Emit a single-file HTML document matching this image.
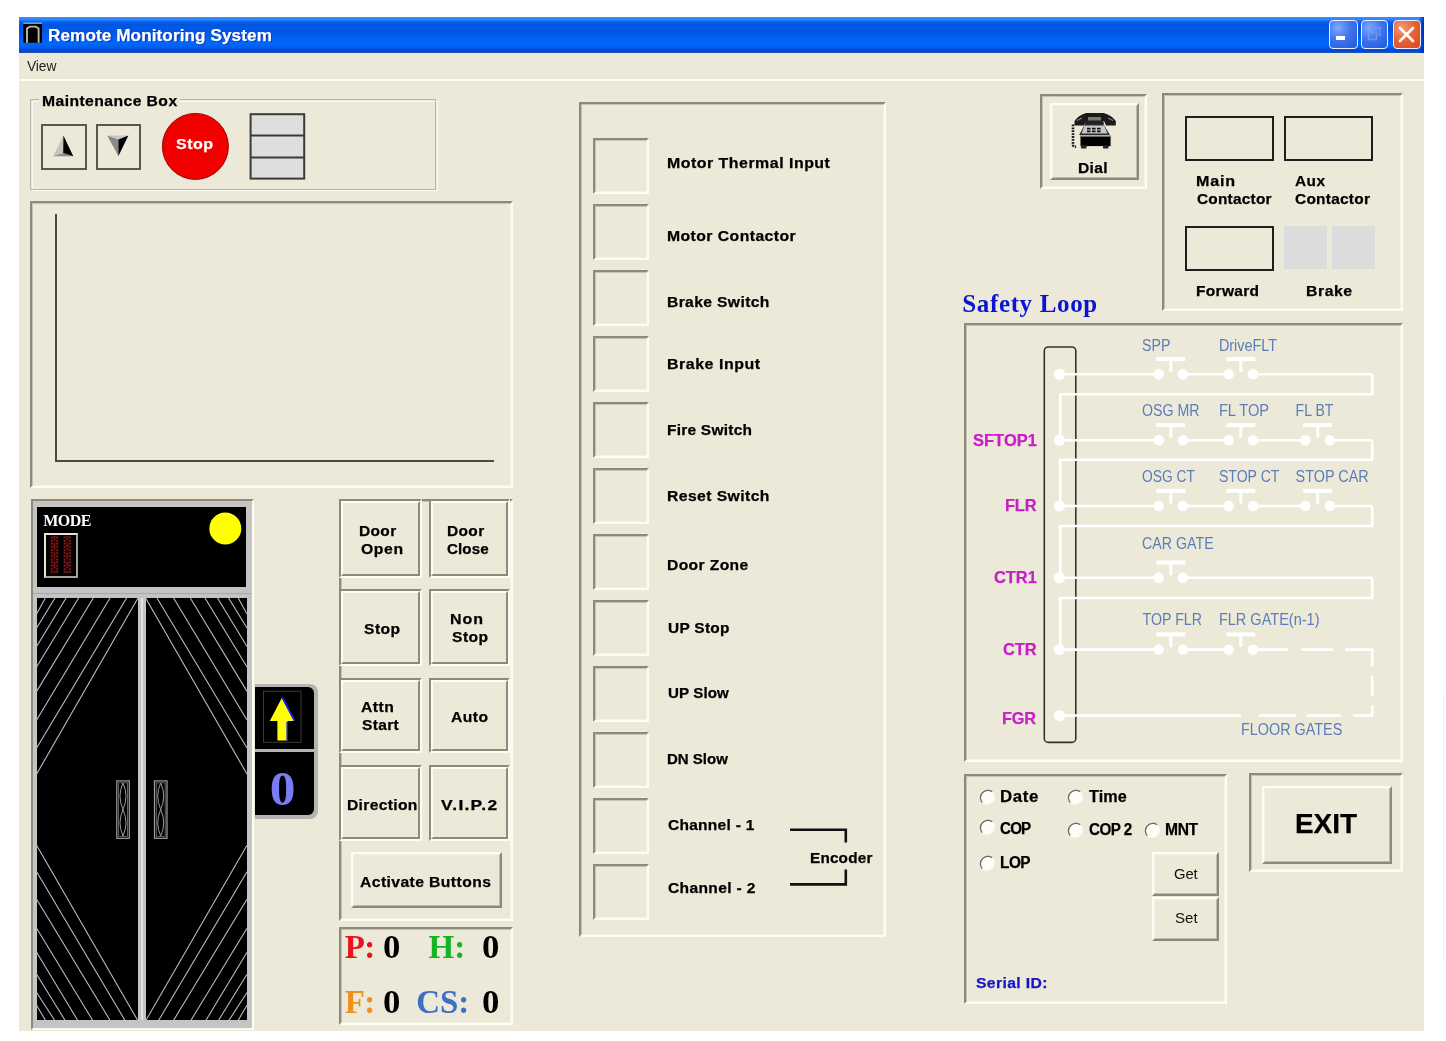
<!DOCTYPE html>
<html><head><meta charset="utf-8"><title>Remote Monitoring System</title>
<style>
html,body{margin:0;padding:0;background:#fff;width:1446px;height:1041px;overflow:hidden;position:relative;}
.b{position:absolute;}
.t{position:absolute;white-space:nowrap;}
svg.b{overflow:visible;}
body>div,body>svg{filter:blur(0.35px);}
.tb{-webkit-text-stroke:0.25px currentColor;}
</style></head><body>
<div class="b" style="left:19px;top:17px;width:1405px;height:36px;background:linear-gradient(to bottom,#3a8cff 0%,#2c86ff 7%,#0a64f0 13%,#0056e2 20%,#0058e6 45%,#0062f6 62%,#0068fe 75%,#005cf2 85%,#0046cc 93%,#2a50b0 100%);"></div>
<div class="b" style="left:1419px;top:17px;width:5px;height:36px;background:linear-gradient(to right,rgba(0,40,170,0),#0030b0);"></div>
<div class="b" style="left:19px;top:53px;width:1405px;height:977.5px;background:#ECE9D8;"></div>
<div class="b" style="left:19px;top:79.3px;width:1405px;height:1.5px;background:#fbfaf3;"></div>
<svg class="b" style="left:0;top:0" width="60" height="60"><rect x="23.3" y="23.5" width="18.7" height="19.3" fill="#000"/><rect x="23.3" y="22.6" width="18.7" height="1.2" fill="#9ab4e6"/><path d="M27 42.8 V28.5 L29.8 26.6 H35.8 L38.6 28.5 V42.8" fill="none" stroke="#bcb8ac" stroke-width="1.9"/></svg>
<div class="t tb" style="left:47.5px;top:26.71px;font-size:17px;line-height:17px;font-family:'Liberation Sans', sans-serif;font-weight:bold;color:#fff;letter-spacing:0.08px;transform:scaleX(1.0089);transform-origin:1.1px 0;text-shadow:1px 1px 0 #0a2a9a;">Remote Monitoring System</div>
<div class="b" style="left:1329px;top:20px;width:29px;height:29px;box-sizing:border-box;border:1.5px solid #e8f0ff;border-radius:4px;background:radial-gradient(circle at 30% 25%,#7fa8ff 0%,#3f74ee 45%,#2058d8 100%);"></div>
<div class="b" style="left:1361px;top:20px;width:27px;height:29px;box-sizing:border-box;border:1.5px solid #e8f0ff;border-radius:4px;background:radial-gradient(circle at 30% 25%,#7fa8ff 0%,#3f74ee 45%,#2058d8 100%);"></div>
<div class="b" style="left:1392.5px;top:20px;width:28.5px;height:29px;box-sizing:border-box;border:1.5px solid #e8f0ff;border-radius:4px;background:radial-gradient(circle at 30% 25%,#f59a78 0%,#e8643a 45%,#d6451c 100%);"></div>
<div class="b" style="left:1336px;top:36px;width:9px;height:4px;background:#fff;"></div>
<svg class="b" style="left:1361px;top:20px" width="27" height="29"><rect x="7.5" y="12.5" width="8" height="7" fill="none" stroke="#6f93ee" stroke-width="1.5"/><path d="M10.5 10 V7.5 H19 V15 H16.5" fill="none" stroke="#6f93ee" stroke-width="1.5"/></svg>
<svg class="b" style="left:1392px;top:20px" width="29" height="29"><path d="M8 8 L21 21 M21 8 L8 21" stroke="#fff" stroke-width="2.6" stroke-linecap="round"/></svg>
<div class="t" style="left:27.03px;top:58.75px;font-size:14px;line-height:14px;font-family:'Liberation Sans', sans-serif;font-weight:normal;color:#222;letter-spacing:-0.12px;transform:scaleX(0.9878);transform-origin:0.07px 0;">View</div>
<div class="b" style="left:31.5px;top:100.6px;width:406px;height:90.2px;box-sizing:border-box;border:1.2px solid #fbfaf2;"></div>
<div class="b" style="left:30px;top:99px;width:406px;height:90.5px;box-sizing:border-box;border:1.5px solid #b9b6a4;"></div>
<div class="b" style="left:39px;top:93px;width:141px;height:11px;background:#ECE9D8;"></div>
<div class="t tb" style="left:42.23px;top:93.3px;font-size:15px;line-height:15px;font-family:'Liberation Sans', sans-serif;font-weight:bold;color:#000;letter-spacing:0.41px;transform:scaleX(1.0469);transform-origin:0.98px 0;">Maintenance Box</div>
<div class="b" style="left:41px;top:124px;width:45.5px;height:45.5px;box-sizing:border-box;border:2px solid #5a584e;"></div>
<div class="b" style="left:95.8px;top:124px;width:45.2px;height:45.5px;box-sizing:border-box;border:2px solid #5a584e;"></div>
<svg class="b" style="left:0;top:0" width="320" height="200"><polygon points="63.4,135.5 53.1,156.3 63.2,153" fill="#c4c4c4"/><polygon points="53.1,156.3 63.2,153 73.3,156.3" fill="#8c8c8c"/><polygon points="63.4,135.5 63.2,153 73.3,156.3" fill="#000"/><polygon points="107.2,135.5 128.4,135.5 118.4,139.5" fill="#c8c8c8"/><polygon points="107.2,135.5 118.4,139.5 118.4,156" fill="#8a8a8a"/><polygon points="118.4,139.5 128.4,135.5 118.4,156" fill="#000"/><circle cx="195.4" cy="146.4" r="33" fill="#f20000" stroke="#9a0000" stroke-width="1"/><rect x="250.6" y="114.2" width="53.6" height="64.4" fill="#dedede" stroke="#3a3a3a" stroke-width="2"/><line x1="250" y1="135.5" x2="305" y2="135.5" stroke="#3a3a3a" stroke-width="2"/><line x1="250" y1="157.5" x2="305" y2="157.5" stroke="#3a3a3a" stroke-width="2"/></svg>
<div class="t tb" style="left:175.53px;top:136.08px;font-size:15.5px;line-height:15.5px;font-family:'Liberation Sans', sans-serif;font-weight:bold;color:#fff;letter-spacing:0.41px;transform:scaleX(1.0371);transform-origin:0.46px 0;">Stop</div>
<div class="b" style="left:30.4px;top:201.4px;width:482.6px;height:287.1px;box-sizing:border-box;border-style:solid;border-width:2.5px;border-color:#8d8a7b #fdfcf5 #fdfcf5 #8d8a7b;box-shadow:inset 1px 1px 0 #8d8a7b66, inset -1px -1px 0 #fdfcf577;"></div>
<div class="b" style="left:54.5px;top:214px;width:2.3px;height:248px;background:#4d4b40;"></div>
<div class="b" style="left:54.5px;top:459.8px;width:439.5px;height:2.2px;background:#4d4b40;"></div>
<div class="b" style="left:31px;top:499px;width:222.5px;height:530.5px;box-sizing:border-box;border-style:solid;border-width:2px;border-color:#8d8a7b #fdfcf5 #fdfcf5 #8d8a7b;"></div>
<div class="b" style="left:33px;top:501px;width:218.5px;height:526.5px;background:#c4c4c4;"></div>
<div class="b" style="left:36.5px;top:507px;width:209.8px;height:79.6px;background:#000;"></div>
<div class="b" style="left:32.5px;top:592.5px;width:218.5px;height:1.5px;background:#a8a8a8;"></div>
<div class="b" style="left:36.6px;top:598px;width:101.4px;height:422.2px;background:#000;"></div>
<div class="b" style="left:145.6px;top:598px;width:101.4px;height:422.2px;background:#000;"></div>
<div class="b" style="left:140.6px;top:598px;width:2.4px;height:422.2px;background:#e2e2e2;"></div>
<div class="t" style="left:43.26px;top:513.4px;font-size:16px;line-height:16px;font-family:'Liberation Serif', serif;font-weight:bold;color:#fff;letter-spacing:-0.57px;">MODE</div>
<div class="b" style="left:43.5px;top:533px;width:34.3px;height:45.4px;box-sizing:border-box;border-style:solid;border-width:2.8px;border-color:#e6e6de #a8a498 #a8a498 #e6e6de;background:#000;"></div>
<svg class="b" style="left:0;top:0" width="260" height="600"><rect x="50.2" y="536" width="8.3" height="37.5" fill="#2a0202"/><rect x="50.9" y="536.6" width="1.6" height="1.6" fill="#8a2020"/><rect x="56.2" y="536.6" width="1.6" height="1.6" fill="#8a2020"/><rect x="50.9" y="540.1" width="1.6" height="1.6" fill="#8a2020"/><rect x="56.2" y="540.1" width="1.6" height="1.6" fill="#8a2020"/><rect x="53.6" y="535.9" width="1.6" height="1.6" fill="#8a2020"/><rect x="53.6" y="538.4" width="1.6" height="1.6" fill="#8a2020"/><rect x="53.6" y="543.2" width="1.6" height="1.6" fill="#8a2020"/><rect x="50.9" y="542.8" width="1.6" height="1.6" fill="#8a2020"/><rect x="56.2" y="542.8" width="1.6" height="1.6" fill="#8a2020"/><rect x="50.9" y="546.0" width="1.6" height="1.6" fill="#8a2020"/><rect x="56.2" y="546.0" width="1.6" height="1.6" fill="#8a2020"/><rect x="50.9" y="549.5" width="1.6" height="1.6" fill="#8a2020"/><rect x="56.2" y="549.5" width="1.6" height="1.6" fill="#8a2020"/><rect x="53.6" y="545.3" width="1.6" height="1.6" fill="#8a2020"/><rect x="53.6" y="547.8" width="1.6" height="1.6" fill="#8a2020"/><rect x="53.6" y="552.6" width="1.6" height="1.6" fill="#8a2020"/><rect x="50.9" y="552.2" width="1.6" height="1.6" fill="#8a2020"/><rect x="56.2" y="552.2" width="1.6" height="1.6" fill="#8a2020"/><rect x="50.9" y="555.4" width="1.6" height="1.6" fill="#8a2020"/><rect x="56.2" y="555.4" width="1.6" height="1.6" fill="#8a2020"/><rect x="50.9" y="558.9" width="1.6" height="1.6" fill="#8a2020"/><rect x="56.2" y="558.9" width="1.6" height="1.6" fill="#8a2020"/><rect x="53.6" y="554.7" width="1.6" height="1.6" fill="#8a2020"/><rect x="53.6" y="557.2" width="1.6" height="1.6" fill="#8a2020"/><rect x="53.6" y="562.0" width="1.6" height="1.6" fill="#8a2020"/><rect x="50.9" y="561.6" width="1.6" height="1.6" fill="#8a2020"/><rect x="56.2" y="561.6" width="1.6" height="1.6" fill="#8a2020"/><rect x="50.9" y="564.8" width="1.6" height="1.6" fill="#8a2020"/><rect x="56.2" y="564.8" width="1.6" height="1.6" fill="#8a2020"/><rect x="50.9" y="568.3" width="1.6" height="1.6" fill="#8a2020"/><rect x="56.2" y="568.3" width="1.6" height="1.6" fill="#8a2020"/><rect x="53.6" y="564.1" width="1.6" height="1.6" fill="#8a2020"/><rect x="53.6" y="566.6" width="1.6" height="1.6" fill="#8a2020"/><rect x="53.6" y="571.4" width="1.6" height="1.6" fill="#8a2020"/><rect x="50.9" y="571.0" width="1.6" height="1.6" fill="#8a2020"/><rect x="56.2" y="571.0" width="1.6" height="1.6" fill="#8a2020"/><rect x="63.2" y="536" width="8.3" height="37.5" fill="#2a0202"/><rect x="63.9" y="536.6" width="1.6" height="1.6" fill="#8a2020"/><rect x="69.2" y="536.6" width="1.6" height="1.6" fill="#8a2020"/><rect x="63.9" y="540.1" width="1.6" height="1.6" fill="#8a2020"/><rect x="69.2" y="540.1" width="1.6" height="1.6" fill="#8a2020"/><rect x="66.6" y="535.9" width="1.6" height="1.6" fill="#8a2020"/><rect x="66.6" y="538.4" width="1.6" height="1.6" fill="#8a2020"/><rect x="66.6" y="543.2" width="1.6" height="1.6" fill="#8a2020"/><rect x="63.9" y="542.8" width="1.6" height="1.6" fill="#8a2020"/><rect x="69.2" y="542.8" width="1.6" height="1.6" fill="#8a2020"/><rect x="63.9" y="546.0" width="1.6" height="1.6" fill="#8a2020"/><rect x="69.2" y="546.0" width="1.6" height="1.6" fill="#8a2020"/><rect x="63.9" y="549.5" width="1.6" height="1.6" fill="#8a2020"/><rect x="69.2" y="549.5" width="1.6" height="1.6" fill="#8a2020"/><rect x="66.6" y="545.3" width="1.6" height="1.6" fill="#8a2020"/><rect x="66.6" y="547.8" width="1.6" height="1.6" fill="#8a2020"/><rect x="66.6" y="552.6" width="1.6" height="1.6" fill="#8a2020"/><rect x="63.9" y="552.2" width="1.6" height="1.6" fill="#8a2020"/><rect x="69.2" y="552.2" width="1.6" height="1.6" fill="#8a2020"/><rect x="63.9" y="555.4" width="1.6" height="1.6" fill="#8a2020"/><rect x="69.2" y="555.4" width="1.6" height="1.6" fill="#8a2020"/><rect x="63.9" y="558.9" width="1.6" height="1.6" fill="#8a2020"/><rect x="69.2" y="558.9" width="1.6" height="1.6" fill="#8a2020"/><rect x="66.6" y="554.7" width="1.6" height="1.6" fill="#8a2020"/><rect x="66.6" y="557.2" width="1.6" height="1.6" fill="#8a2020"/><rect x="66.6" y="562.0" width="1.6" height="1.6" fill="#8a2020"/><rect x="63.9" y="561.6" width="1.6" height="1.6" fill="#8a2020"/><rect x="69.2" y="561.6" width="1.6" height="1.6" fill="#8a2020"/><rect x="63.9" y="564.8" width="1.6" height="1.6" fill="#8a2020"/><rect x="69.2" y="564.8" width="1.6" height="1.6" fill="#8a2020"/><rect x="63.9" y="568.3" width="1.6" height="1.6" fill="#8a2020"/><rect x="69.2" y="568.3" width="1.6" height="1.6" fill="#8a2020"/><rect x="66.6" y="564.1" width="1.6" height="1.6" fill="#8a2020"/><rect x="66.6" y="566.6" width="1.6" height="1.6" fill="#8a2020"/><rect x="66.6" y="571.4" width="1.6" height="1.6" fill="#8a2020"/><rect x="63.9" y="571.0" width="1.6" height="1.6" fill="#8a2020"/><rect x="69.2" y="571.0" width="1.6" height="1.6" fill="#8a2020"/><circle cx="225.3" cy="528.5" r="16" fill="#ffff00"/></svg>
<svg class="b" style="left:0;top:0" width="260" height="1041"><g stroke="#bdbdbd" stroke-width="1.1"><line x1="36.6" y1="614.0" x2="45.4" y2="598.0"/><line x1="247.0" y1="614.0" x2="238.2" y2="598.0"/><line x1="36.6" y1="628.0" x2="55.0" y2="598.0"/><line x1="247.0" y1="628.0" x2="228.6" y2="598.0"/><line x1="36.6" y1="646.5" x2="66.1" y2="598.0"/><line x1="247.0" y1="646.5" x2="217.5" y2="598.0"/><line x1="36.6" y1="667.0" x2="78.6" y2="598.0"/><line x1="247.0" y1="667.0" x2="205.0" y2="598.0"/><line x1="36.6" y1="691.4" x2="93.3" y2="598.0"/><line x1="247.0" y1="691.4" x2="190.3" y2="598.0"/><line x1="36.6" y1="720.0" x2="110.0" y2="598.0"/><line x1="247.0" y1="720.0" x2="173.6" y2="598.0"/><line x1="36.6" y1="748.0" x2="126.6" y2="598.0"/><line x1="247.0" y1="748.0" x2="157.0" y2="598.0"/><line x1="36.6" y1="774.0" x2="138.0" y2="598.0"/><line x1="247.0" y1="774.0" x2="145.6" y2="598.0"/><line x1="36.6" y1="1005.2" x2="45.4" y2="1020.2"/><line x1="247.0" y1="1005.2" x2="238.2" y2="1020.2"/><line x1="36.6" y1="992.5" x2="54.6" y2="1020.2"/><line x1="247.0" y1="992.5" x2="229.0" y2="1020.2"/><line x1="36.6" y1="974.2" x2="65.0" y2="1020.2"/><line x1="247.0" y1="974.2" x2="218.6" y2="1020.2"/><line x1="36.6" y1="952.2" x2="77.6" y2="1020.2"/><line x1="247.0" y1="952.2" x2="206.0" y2="1020.2"/><line x1="36.6" y1="928.2" x2="92.6" y2="1020.2"/><line x1="247.0" y1="928.2" x2="191.0" y2="1020.2"/><line x1="36.6" y1="899.2" x2="110.0" y2="1020.2"/><line x1="247.0" y1="899.2" x2="173.6" y2="1020.2"/><line x1="36.6" y1="871.7" x2="124.9" y2="1020.2"/><line x1="247.0" y1="871.7" x2="158.7" y2="1020.2"/><line x1="36.6" y1="845.2" x2="137.6" y2="1020.2"/><line x1="247.0" y1="845.2" x2="146.0" y2="1020.2"/></g><rect x="116.8" y="780.9" width="12.5" height="57.4" fill="none" stroke="#a0a0a0" stroke-width="1.2"/><rect x="118.6" y="782.8" width="8.9" height="53.6" fill="none" stroke="#6a6a6a" stroke-width="0.9"/><path d="M123.0 783 Q117.0 796 123.0 809.5 Q129.0 796 123.0 783 M123.0 809.5 Q117.0 823 123.0 836 Q129.0 823 123.0 809.5" fill="none" stroke="#9a9a9a" stroke-width="1"/><rect x="154.5" y="780.9" width="12.5" height="57.4" fill="none" stroke="#a0a0a0" stroke-width="1.2"/><rect x="156.3" y="782.8" width="8.9" height="53.6" fill="none" stroke="#6a6a6a" stroke-width="0.9"/><path d="M160.7 783 Q154.7 796 160.7 809.5 Q166.7 796 160.7 783 M160.7 809.5 Q154.7 823 160.7 836 Q166.7 823 160.7 809.5" fill="none" stroke="#9a9a9a" stroke-width="1"/></svg>
<div class="b" style="left:255px;top:683.5px;width:62.5px;height:135px;background:#b4b4b4;border-radius:0 8px 8px 0;"></div>
<div class="b" style="left:255px;top:687px;width:59px;height:61.5px;background:#000;border-radius:0 6px 0 0;"></div>
<div class="b" style="left:255px;top:752px;width:59px;height:63px;background:#000;border-radius:0 0 6px 0;"></div>
<svg class="b" style="left:0;top:0" width="320" height="820"><rect x="263.5" y="691.3" width="37.5" height="51" fill="none" stroke="#3a3a3a" stroke-width="1"/><polygon points="282.2,697.3 294.7,721 287.5,721 287.5,740.5 277.4,740.5 277.4,721 269.8,721" fill="#ffff00"/><polyline points="282.2,697.3 294.7,721 M" fill="none" stroke="#1010ff" stroke-width="1.5"/><path d="M282.6 697.8 L294.5 720.6 M287.2 722 L287.2 740.5" fill="none" stroke="#1a1aff" stroke-width="1.6"/></svg>
<div class="t" style="left:270.48px;top:765.1px;font-size:48px;line-height:48px;font-family:'Liberation Serif', serif;font-weight:bold;color:#7b7bf5;transform:scaleX(1.0714);transform-origin:1.92px 0;">0</div>
<div class="b" style="left:338.5px;top:498.5px;width:174.5px;height:422.5px;box-sizing:border-box;border-style:solid;border-width:2.2px;border-color:#8d8a7b #fdfcf5 #fdfcf5 #8d8a7b;box-shadow:inset 1px 1px 0 #8d8a7b66, inset -1px -1px 0 #fdfcf577;"></div>
<div class="b" style="left:338.5px;top:498.5px;width:83px;height:79.5px;box-sizing:border-box;border-style:solid;border-width:2px;border-color:#8d8a7b #fdfcf5 #fdfcf5 #8d8a7b;"></div>
<div class="b" style="left:340.5px;top:500.5px;width:79px;height:75.5px;box-sizing:border-box;border-style:solid;border-width:2px;border-color:#fdfcf5 #8d8a7b #8d8a7b #fdfcf5;"></div>
<div class="b" style="left:428.5px;top:498.5px;width:81.5px;height:79.5px;box-sizing:border-box;border-style:solid;border-width:2px;border-color:#8d8a7b #fdfcf5 #fdfcf5 #8d8a7b;"></div>
<div class="b" style="left:430.5px;top:500.5px;width:77.5px;height:75.5px;box-sizing:border-box;border-style:solid;border-width:2px;border-color:#fdfcf5 #8d8a7b #8d8a7b #fdfcf5;"></div>
<div class="b" style="left:338.5px;top:589.2px;width:83px;height:76.4px;box-sizing:border-box;border-style:solid;border-width:2px;border-color:#8d8a7b #fdfcf5 #fdfcf5 #8d8a7b;"></div>
<div class="b" style="left:340.5px;top:591.2px;width:79px;height:72.4px;box-sizing:border-box;border-style:solid;border-width:2px;border-color:#fdfcf5 #8d8a7b #8d8a7b #fdfcf5;"></div>
<div class="b" style="left:428.5px;top:589.2px;width:81.5px;height:76.4px;box-sizing:border-box;border-style:solid;border-width:2px;border-color:#8d8a7b #fdfcf5 #fdfcf5 #8d8a7b;"></div>
<div class="b" style="left:430.5px;top:591.2px;width:77.5px;height:72.4px;box-sizing:border-box;border-style:solid;border-width:2px;border-color:#fdfcf5 #8d8a7b #8d8a7b #fdfcf5;"></div>
<div class="b" style="left:338.5px;top:677.6px;width:83px;height:75.9px;box-sizing:border-box;border-style:solid;border-width:2px;border-color:#8d8a7b #fdfcf5 #fdfcf5 #8d8a7b;"></div>
<div class="b" style="left:340.5px;top:679.6px;width:79px;height:71.9px;box-sizing:border-box;border-style:solid;border-width:2px;border-color:#fdfcf5 #8d8a7b #8d8a7b #fdfcf5;"></div>
<div class="b" style="left:428.5px;top:677.6px;width:81.5px;height:75.9px;box-sizing:border-box;border-style:solid;border-width:2px;border-color:#8d8a7b #fdfcf5 #fdfcf5 #8d8a7b;"></div>
<div class="b" style="left:430.5px;top:679.6px;width:77.5px;height:71.9px;box-sizing:border-box;border-style:solid;border-width:2px;border-color:#fdfcf5 #8d8a7b #8d8a7b #fdfcf5;"></div>
<div class="b" style="left:338.5px;top:765.4px;width:83px;height:76.1px;box-sizing:border-box;border-style:solid;border-width:2px;border-color:#8d8a7b #fdfcf5 #fdfcf5 #8d8a7b;"></div>
<div class="b" style="left:340.5px;top:767.4px;width:79px;height:72.1px;box-sizing:border-box;border-style:solid;border-width:2px;border-color:#fdfcf5 #8d8a7b #8d8a7b #fdfcf5;"></div>
<div class="b" style="left:428.5px;top:765.4px;width:81.5px;height:76.1px;box-sizing:border-box;border-style:solid;border-width:2px;border-color:#8d8a7b #fdfcf5 #fdfcf5 #8d8a7b;"></div>
<div class="b" style="left:430.5px;top:767.4px;width:77.5px;height:72.1px;box-sizing:border-box;border-style:solid;border-width:2px;border-color:#fdfcf5 #8d8a7b #8d8a7b #fdfcf5;"></div>
<div class="t tb" style="left:359.02px;top:523.3px;font-size:15px;line-height:15px;font-family:'Liberation Sans', sans-serif;font-weight:bold;color:#000;letter-spacing:0.36px;transform:scaleX(1.0322);transform-origin:0.98px 0;">Door</div>
<div class="t tb" style="left:360.9px;top:541.3px;font-size:15px;line-height:15px;font-family:'Liberation Sans', sans-serif;font-weight:bold;color:#000;letter-spacing:0.6px;transform:scaleX(1.0485);transform-origin:0.6px 0;">Open</div>
<div class="t tb" style="left:447.02px;top:523.3px;font-size:15px;line-height:15px;font-family:'Liberation Sans', sans-serif;font-weight:bold;color:#000;letter-spacing:0.36px;transform:scaleX(1.0322);transform-origin:0.98px 0;">Door</div>
<div class="t tb" style="left:447.4px;top:541.3px;font-size:15px;line-height:15px;font-family:'Liberation Sans', sans-serif;font-weight:bold;color:#000;letter-spacing:0.1px;transform:scaleX(1.0104);transform-origin:0.6px 0;">Close</div>
<div class="t tb" style="left:363.75px;top:620.7px;font-size:15px;line-height:15px;font-family:'Liberation Sans', sans-serif;font-weight:bold;color:#000;letter-spacing:0.46px;transform:scaleX(1.0426);transform-origin:0.45px 0;">Stop</div>
<div class="t tb" style="left:450.02px;top:611.1px;font-size:15px;line-height:15px;font-family:'Liberation Sans', sans-serif;font-weight:bold;color:#000;letter-spacing:0.93px;transform:scaleX(1.0678);transform-origin:0.98px 0;">Non</div>
<div class="t tb" style="left:451.55px;top:629.3px;font-size:15px;line-height:15px;font-family:'Liberation Sans', sans-serif;font-weight:bold;color:#000;letter-spacing:0.46px;transform:scaleX(1.0426);transform-origin:0.45px 0;">Stop</div>
<div class="t tb" style="left:361.32px;top:699.3px;font-size:15px;line-height:15px;font-family:'Liberation Sans', sans-serif;font-weight:bold;color:#000;letter-spacing:0.46px;transform:scaleX(1.0483);transform-origin:0.38px 0;">Attn</div>
<div class="t tb" style="left:362.05px;top:716.8px;font-size:15px;line-height:15px;font-family:'Liberation Sans', sans-serif;font-weight:bold;color:#000;letter-spacing:0.31px;transform:scaleX(1.0369);transform-origin:0.45px 0;">Start</div>
<div class="t tb" style="left:450.62px;top:709.1px;font-size:15px;line-height:15px;font-family:'Liberation Sans', sans-serif;font-weight:bold;color:#000;letter-spacing:0.47px;transform:scaleX(1.0430);transform-origin:0.38px 0;">Auto</div>
<div class="t tb" style="left:346.72px;top:796.9px;font-size:15px;line-height:15px;font-family:'Liberation Sans', sans-serif;font-weight:bold;color:#000;letter-spacing:0.32px;transform:scaleX(1.0408);transform-origin:0.98px 0;">Direction</div>
<div class="t tb" style="left:441.32px;top:796.9px;font-size:15px;line-height:15px;font-family:'Liberation Sans', sans-serif;font-weight:bold;color:#000;letter-spacing:1.1px;transform:scaleX(1.1606);transform-origin:0.07px 0;">V.I.P.2</div>
<div class="b" style="left:351px;top:851.8px;width:151px;height:56.7px;box-sizing:border-box;border-style:solid;border-width:2px;border-color:#fdfcf5 #8d8a7b #8d8a7b #fdfcf5;box-shadow:inset 1px 1px 0 #fdfcf566, inset -1px -1px 0 #8d8a7b77;"></div>
<div class="t tb" style="left:360.02px;top:873.7px;font-size:15px;line-height:15px;font-family:'Liberation Sans', sans-serif;font-weight:bold;color:#000;letter-spacing:0.38px;transform:scaleX(1.0482);transform-origin:0.38px 0;">Activate Buttons</div>
<div class="b" style="left:338.6px;top:927.4px;width:174.4px;height:98.1px;box-sizing:border-box;border-style:solid;border-width:2.2px;border-color:#8d8a7b #fdfcf5 #fdfcf5 #8d8a7b;box-shadow:inset 1px 1px 0 #8d8a7b66, inset -1px -1px 0 #fdfcf577;"></div>
<div class="t" style="left:344.7px;top:930.56px;font-size:33px;line-height:33px;font-family:'Liberation Serif', serif;font-weight:bold;color:#e8141c;">P</div>
<div class="t" style="left:364.26px;top:930.56px;font-size:33px;line-height:33px;font-family:'Liberation Serif', serif;font-weight:bold;color:#e8141c;">:</div>
<div class="t" style="left:428.4px;top:930.56px;font-size:33px;line-height:33px;font-family:'Liberation Serif', serif;font-weight:bold;color:#14b424;">H</div>
<div class="t" style="left:454.16px;top:930.56px;font-size:33px;line-height:33px;font-family:'Liberation Serif', serif;font-weight:bold;color:#14b424;">:</div>
<div class="t" style="left:344.7px;top:985.56px;font-size:33px;line-height:33px;font-family:'Liberation Serif', serif;font-weight:bold;color:#f0901c;">F</div>
<div class="t" style="left:364.26px;top:985.56px;font-size:33px;line-height:33px;font-family:'Liberation Serif', serif;font-weight:bold;color:#f0901c;">:</div>
<div class="t" style="left:416.15px;top:985.56px;font-size:33px;line-height:33px;font-family:'Liberation Serif', serif;font-weight:bold;color:#3c70c4;">CS</div>
<div class="t" style="left:458.26px;top:985.56px;font-size:33px;line-height:33px;font-family:'Liberation Serif', serif;font-weight:bold;color:#3c70c4;">:</div>
<div class="t" style="left:383.24px;top:929.73px;font-size:34px;line-height:34px;font-family:'Liberation Serif', serif;font-weight:bold;color:#000;transform:scaleX(1.0224);transform-origin:1.36px 0;">0</div>
<div class="t" style="left:482.44px;top:929.73px;font-size:34px;line-height:34px;font-family:'Liberation Serif', serif;font-weight:bold;color:#000;transform:scaleX(1.0224);transform-origin:1.36px 0;">0</div>
<div class="t" style="left:383.24px;top:984.73px;font-size:34px;line-height:34px;font-family:'Liberation Serif', serif;font-weight:bold;color:#000;transform:scaleX(1.0224);transform-origin:1.36px 0;">0</div>
<div class="t" style="left:482.44px;top:984.73px;font-size:34px;line-height:34px;font-family:'Liberation Serif', serif;font-weight:bold;color:#000;transform:scaleX(1.0224);transform-origin:1.36px 0;">0</div>
<div class="b" style="left:579.2px;top:102.4px;width:307.3px;height:834.6px;box-sizing:border-box;border-style:solid;border-width:2.5px;border-color:#8d8a7b #fdfcf5 #fdfcf5 #8d8a7b;box-shadow:inset 1px 1px 0 #8d8a7b66, inset -1px -1px 0 #fdfcf577;"></div>
<div class="b" style="left:592.8px;top:138.4px;width:56.2px;height:55.6px;box-sizing:border-box;border-style:solid;border-width:2.5px;border-color:#8d8a7b #fdfcf5 #fdfcf5 #8d8a7b;box-shadow:inset 1px 1px 0 #8d8a7b66, inset -1px -1px 0 #fdfcf577;"></div>
<div class="b" style="left:592.8px;top:204.4px;width:56.2px;height:55.6px;box-sizing:border-box;border-style:solid;border-width:2.5px;border-color:#8d8a7b #fdfcf5 #fdfcf5 #8d8a7b;box-shadow:inset 1px 1px 0 #8d8a7b66, inset -1px -1px 0 #fdfcf577;"></div>
<div class="b" style="left:592.8px;top:270.4px;width:56.2px;height:55.6px;box-sizing:border-box;border-style:solid;border-width:2.5px;border-color:#8d8a7b #fdfcf5 #fdfcf5 #8d8a7b;box-shadow:inset 1px 1px 0 #8d8a7b66, inset -1px -1px 0 #fdfcf577;"></div>
<div class="b" style="left:592.8px;top:336.4px;width:56.2px;height:55.6px;box-sizing:border-box;border-style:solid;border-width:2.5px;border-color:#8d8a7b #fdfcf5 #fdfcf5 #8d8a7b;box-shadow:inset 1px 1px 0 #8d8a7b66, inset -1px -1px 0 #fdfcf577;"></div>
<div class="b" style="left:592.8px;top:402.4px;width:56.2px;height:55.6px;box-sizing:border-box;border-style:solid;border-width:2.5px;border-color:#8d8a7b #fdfcf5 #fdfcf5 #8d8a7b;box-shadow:inset 1px 1px 0 #8d8a7b66, inset -1px -1px 0 #fdfcf577;"></div>
<div class="b" style="left:592.8px;top:468.4px;width:56.2px;height:55.6px;box-sizing:border-box;border-style:solid;border-width:2.5px;border-color:#8d8a7b #fdfcf5 #fdfcf5 #8d8a7b;box-shadow:inset 1px 1px 0 #8d8a7b66, inset -1px -1px 0 #fdfcf577;"></div>
<div class="b" style="left:592.8px;top:534.4px;width:56.2px;height:55.6px;box-sizing:border-box;border-style:solid;border-width:2.5px;border-color:#8d8a7b #fdfcf5 #fdfcf5 #8d8a7b;box-shadow:inset 1px 1px 0 #8d8a7b66, inset -1px -1px 0 #fdfcf577;"></div>
<div class="b" style="left:592.8px;top:600.4px;width:56.2px;height:55.6px;box-sizing:border-box;border-style:solid;border-width:2.5px;border-color:#8d8a7b #fdfcf5 #fdfcf5 #8d8a7b;box-shadow:inset 1px 1px 0 #8d8a7b66, inset -1px -1px 0 #fdfcf577;"></div>
<div class="b" style="left:592.8px;top:666.4px;width:56.2px;height:55.6px;box-sizing:border-box;border-style:solid;border-width:2.5px;border-color:#8d8a7b #fdfcf5 #fdfcf5 #8d8a7b;box-shadow:inset 1px 1px 0 #8d8a7b66, inset -1px -1px 0 #fdfcf577;"></div>
<div class="b" style="left:592.8px;top:732.4px;width:56.2px;height:55.6px;box-sizing:border-box;border-style:solid;border-width:2.5px;border-color:#8d8a7b #fdfcf5 #fdfcf5 #8d8a7b;box-shadow:inset 1px 1px 0 #8d8a7b66, inset -1px -1px 0 #fdfcf577;"></div>
<div class="b" style="left:592.8px;top:798.4px;width:56.2px;height:55.6px;box-sizing:border-box;border-style:solid;border-width:2.5px;border-color:#8d8a7b #fdfcf5 #fdfcf5 #8d8a7b;box-shadow:inset 1px 1px 0 #8d8a7b66, inset -1px -1px 0 #fdfcf577;"></div>
<div class="b" style="left:592.8px;top:864.4px;width:56.2px;height:55.6px;box-sizing:border-box;border-style:solid;border-width:2.5px;border-color:#8d8a7b #fdfcf5 #fdfcf5 #8d8a7b;box-shadow:inset 1px 1px 0 #8d8a7b66, inset -1px -1px 0 #fdfcf577;"></div>
<div class="t tb" style="left:667.42px;top:155.4px;font-size:15px;line-height:15px;font-family:'Liberation Sans', sans-serif;font-weight:bold;color:#000;letter-spacing:0.48px;transform:scaleX(1.0607);transform-origin:0.98px 0;">Motor Thermal Input</div>
<div class="t tb" style="left:667.42px;top:228.2px;font-size:15px;line-height:15px;font-family:'Liberation Sans', sans-serif;font-weight:bold;color:#000;letter-spacing:0.42px;transform:scaleX(1.0506);transform-origin:0.98px 0;">Motor Contactor</div>
<div class="t tb" style="left:667.42px;top:293.7px;font-size:15px;line-height:15px;font-family:'Liberation Sans', sans-serif;font-weight:bold;color:#000;letter-spacing:0.36px;transform:scaleX(1.0432);transform-origin:0.98px 0;">Brake Switch</div>
<div class="t tb" style="left:667.42px;top:355.9px;font-size:15px;line-height:15px;font-family:'Liberation Sans', sans-serif;font-weight:bold;color:#000;letter-spacing:0.51px;transform:scaleX(1.0628);transform-origin:0.98px 0;">Brake Input</div>
<div class="t tb" style="left:667.42px;top:421.9px;font-size:15px;line-height:15px;font-family:'Liberation Sans', sans-serif;font-weight:bold;color:#000;letter-spacing:0.24px;transform:scaleX(1.0310);transform-origin:0.98px 0;">Fire Switch</div>
<div class="t tb" style="left:667.42px;top:487.5px;font-size:15px;line-height:15px;font-family:'Liberation Sans', sans-serif;font-weight:bold;color:#000;letter-spacing:0.4px;transform:scaleX(1.0481);transform-origin:0.98px 0;">Reset Switch</div>
<div class="t tb" style="left:667.42px;top:556.7px;font-size:15px;line-height:15px;font-family:'Liberation Sans', sans-serif;font-weight:bold;color:#000;letter-spacing:0.38px;transform:scaleX(1.0415);transform-origin:0.98px 0;">Door Zone</div>
<div class="t tb" style="left:667.5px;top:619.6px;font-size:15px;line-height:15px;font-family:'Liberation Sans', sans-serif;font-weight:bold;color:#000;letter-spacing:0.28px;transform:scaleX(1.0296);transform-origin:0.9px 0;">UP Stop</div>
<div class="t tb" style="left:667.5px;top:685.3px;font-size:15px;line-height:15px;font-family:'Liberation Sans', sans-serif;font-weight:bold;color:#000;letter-spacing:0.09px;transform:scaleX(1.0087);transform-origin:0.9px 0;">UP Slow</div>
<div class="t tb" style="left:667.42px;top:751.4px;font-size:15px;line-height:15px;font-family:'Liberation Sans', sans-serif;font-weight:bold;color:#000;letter-spacing:-0px;transform:scaleX(0.9998);transform-origin:0.98px 0;">DN Slow</div>
<div class="t tb" style="left:667.8px;top:817.3px;font-size:15px;line-height:15px;font-family:'Liberation Sans', sans-serif;font-weight:bold;color:#000;letter-spacing:0.27px;transform:scaleX(1.0340);transform-origin:0.6px 0;">Channel - 1</div>
<div class="t tb" style="left:667.8px;top:880px;font-size:15px;line-height:15px;font-family:'Liberation Sans', sans-serif;font-weight:bold;color:#000;letter-spacing:0.32px;transform:scaleX(1.0399);transform-origin:0.6px 0;">Channel - 2</div>
<div class="t tb" style="left:810.32px;top:850.1px;font-size:15px;line-height:15px;font-family:'Liberation Sans', sans-serif;font-weight:bold;color:#000;letter-spacing:0.19px;transform:scaleX(1.0196);transform-origin:0.98px 0;">Encoder</div>
<svg class="b" style="left:0;top:0" width="900" height="900"><path d="M790 829.8 H845.8 V842.5 M790 884.4 H845.8 V869.5" fill="none" stroke="#111" stroke-width="2.6"/></svg>
<div class="b" style="left:1040.4px;top:93.8px;width:106.6px;height:95px;box-sizing:border-box;border-style:solid;border-width:2.2px;border-color:#8d8a7b #fdfcf5 #fdfcf5 #8d8a7b;box-shadow:inset 1px 1px 0 #8d8a7b66, inset -1px -1px 0 #fdfcf577;"></div>
<div class="b" style="left:1050.2px;top:102.5px;width:88.8px;height:77.3px;box-sizing:border-box;border-style:solid;border-width:2.2px;border-color:#fdfcf5 #8d8a7b #8d8a7b #fdfcf5;box-shadow:inset 1px 1px 0 #fdfcf566, inset -1px -1px 0 #8d8a7b77;"></div>
<svg class="b" style="left:0;top:0" width="1130" height="160"><path d="M1074.5 125.5 L1074.5 121 Q1078 115.5 1086 113 L1103.8 113 Q1112 115.5 1115.8 121 L1115.8 125.5 L1106 125.5 L1104 121 L1086 121 L1084 125.5 Z" fill="#1a1a1a"/><path d="M1077 120.5 L1082 118 M1108 118 L1113 120.5" stroke="#9a9a9a" stroke-width="1"/><path d="M1085 121 H1103.3 L1104 124 H1085 Z" fill="#222"/><rect x="1088" y="117" width="13" height="3.5" fill="#777"/><path d="M1085 124 H1103.3 L1110 135 H1079.2 Z" fill="#2a2a2a"/><path d="M1084.5 125.5 H1104 L1107.5 133.5 H1081.5 Z" fill="#c8c8c8"/><path d="M1087 128.6 H1101.5 M1087 131.4 H1101.5" stroke="#111" stroke-width="1.6" stroke-dasharray="3.6 1.4"/><rect x="1080.2" y="135.3" width="30.8" height="10.8" fill="#000"/><rect x="1080.2" y="135" width="30.8" height="1.6" fill="#b0b0b0"/><path d="M1080.6 136 V146 M1110.6 136 V146" stroke="#777" stroke-width="1"/><rect x="1081" y="145" width="5.5" height="3.6" rx="1.2" fill="#222"/><rect x="1103" y="145" width="5.5" height="3.6" rx="1.2" fill="#222"/><path d="M1073 124.5 V145 Q1073.5 147 1076 146.5" fill="none" stroke="#1a1a1a" stroke-width="2.6" stroke-dasharray="1.8 1.1"/></svg>
<div class="t tb" style="left:1078.43px;top:159.6px;font-size:15px;line-height:15px;font-family:'Liberation Sans', sans-serif;font-weight:bold;color:#000;letter-spacing:0.35px;transform:scaleX(1.0412);transform-origin:0.98px 0;">Dial</div>
<div class="b" style="left:1161.5px;top:92.7px;width:241.5px;height:218.3px;box-sizing:border-box;border-style:solid;border-width:2.2px;border-color:#8d8a7b #fdfcf5 #fdfcf5 #8d8a7b;box-shadow:inset 1px 1px 0 #8d8a7b66, inset -1px -1px 0 #fdfcf577;"></div>
<div class="b" style="left:1185px;top:115.7px;width:89.3px;height:45.3px;box-sizing:border-box;border:2.2px solid #1e1e1e;"></div>
<div class="b" style="left:1284.2px;top:115.7px;width:89.2px;height:45.3px;box-sizing:border-box;border:2.2px solid #1e1e1e;"></div>
<div class="b" style="left:1185px;top:225.7px;width:89.3px;height:45.5px;box-sizing:border-box;border:2.2px solid #1e1e1e;"></div>
<div class="b" style="left:1284.2px;top:225.7px;width:43.3px;height:43.8px;background:#dcdcdc;"></div>
<div class="b" style="left:1332.1px;top:225.7px;width:43.3px;height:43.8px;background:#dcdcdc;"></div>
<div class="t tb" style="left:1196.33px;top:172.9px;font-size:15px;line-height:15px;font-family:'Liberation Sans', sans-serif;font-weight:bold;color:#000;letter-spacing:0.79px;transform:scaleX(1.0736);transform-origin:0.98px 0;">Main</div>
<div class="t tb" style="left:1196.7px;top:191.3px;font-size:15px;line-height:15px;font-family:'Liberation Sans', sans-serif;font-weight:bold;color:#000;letter-spacing:0.23px;transform:scaleX(1.0261);transform-origin:0.6px 0;">Contactor</div>
<div class="t tb" style="left:1294.83px;top:172.9px;font-size:15px;line-height:15px;font-family:'Liberation Sans', sans-serif;font-weight:bold;color:#000;letter-spacing:0.4px;transform:scaleX(1.0287);transform-origin:0.38px 0;">Aux</div>
<div class="t tb" style="left:1295.4px;top:191.3px;font-size:15px;line-height:15px;font-family:'Liberation Sans', sans-serif;font-weight:bold;color:#000;letter-spacing:0.25px;transform:scaleX(1.0289);transform-origin:0.6px 0;">Contactor</div>
<div class="t tb" style="left:1196.33px;top:282.8px;font-size:15px;line-height:15px;font-family:'Liberation Sans', sans-serif;font-weight:bold;color:#000;letter-spacing:0.31px;transform:scaleX(1.0330);transform-origin:0.98px 0;">Forward</div>
<div class="t tb" style="left:1306.23px;top:282.8px;font-size:15px;line-height:15px;font-family:'Liberation Sans', sans-serif;font-weight:bold;color:#000;letter-spacing:0.54px;transform:scaleX(1.0535);transform-origin:0.98px 0;">Brake</div>
<div class="t" style="left:962.23px;top:291.36px;font-size:25px;line-height:25px;font-family:'Liberation Serif', serif;font-weight:bold;color:#0a14d2;letter-spacing:0.65px;">Safety Loop</div>
<div class="b" style="left:963.8px;top:322.7px;width:439.2px;height:439.3px;box-sizing:border-box;border-style:solid;border-width:2.4px;border-color:#8d8a7b #fdfcf5 #fdfcf5 #8d8a7b;box-shadow:inset 1px 1px 0 #8d8a7b66, inset -1px -1px 0 #fdfcf577;"></div>
<svg class="b" style="left:0;top:0" width="1446" height="1041"><rect x="1044.3" y="347" width="31.5" height="395.4" rx="4" fill="none" stroke="#33322c" stroke-width="1.6"/><path d="M1060.2 374.3 H1158.7 M1183.0 374.3 H1228.6 M1253.0 374.3 H1372.2 M1372.2 374.3 V394.3 H1060.2 V440.3 M1060.2 440.3 H1158.7 M1183.0 440.3 H1228.6 M1253.0 440.3 H1305.4 M1329.9 440.3 H1372.2 M1372.2 440.3 V459.7 H1060.2 V506 M1060.2 506 H1158.7 M1183.0 506 H1228.6 M1253.0 506 H1305.4 M1329.9 506 H1372.2 M1372.2 506 V526 H1060.2 V577.7 M1060.2 577.7 H1158.7 M1183.0 577.7 H1372.2 M1372.2 577.7 V598 H1060.2 V649.6 M1060.2 649.6 H1158.7 M1183.0 649.6 H1228.6 M1253.0 649.6 H1287.8 M1301.2 649.6 H1332.8 M1345.2 649.6 H1372.2 V666.4 M1372.2 675.7 V696.5 M1372.2 705.8 V715.5 H1353.5 M1340.7 715.5 H1306.4 M1296 715.5 H1258.7 M1241 715.5 H1060.2" fill="none" stroke="#ffffff" stroke-width="2.6"/><circle cx="1059.5" cy="374.3" r="5.6" fill="#ffffff"/><circle cx="1059.5" cy="440.3" r="5.6" fill="#ffffff"/><circle cx="1059.5" cy="506" r="5.6" fill="#ffffff"/><circle cx="1059.5" cy="577.7" r="5.6" fill="#ffffff"/><circle cx="1059.5" cy="649.6" r="5.6" fill="#ffffff"/><circle cx="1059.5" cy="715.5" r="5.6" fill="#ffffff"/><circle cx="1158.7" cy="374.3" r="5.2" fill="#ffffff"/><circle cx="1183" cy="374.3" r="5.2" fill="#ffffff"/><rect x="1156.4" y="357.1" width="28.9" height="4" fill="#ffffff"/><rect x="1169.3" y="360.3" width="3" height="11.5" fill="#ffffff"/><circle cx="1228.6" cy="374.3" r="5.2" fill="#ffffff"/><circle cx="1253" cy="374.3" r="5.2" fill="#ffffff"/><rect x="1226.3" y="357.1" width="29.0" height="4" fill="#ffffff"/><rect x="1239.3" y="360.3" width="3" height="11.5" fill="#ffffff"/><circle cx="1158.7" cy="440.3" r="5.2" fill="#ffffff"/><circle cx="1183" cy="440.3" r="5.2" fill="#ffffff"/><rect x="1156.4" y="423.1" width="28.9" height="4" fill="#ffffff"/><rect x="1169.3" y="426.3" width="3" height="11.5" fill="#ffffff"/><circle cx="1228.6" cy="440.3" r="5.2" fill="#ffffff"/><circle cx="1253" cy="440.3" r="5.2" fill="#ffffff"/><rect x="1226.3" y="423.1" width="29.0" height="4" fill="#ffffff"/><rect x="1239.3" y="426.3" width="3" height="11.5" fill="#ffffff"/><circle cx="1305.4" cy="440.3" r="5.2" fill="#ffffff"/><circle cx="1329.9" cy="440.3" r="5.2" fill="#ffffff"/><rect x="1303.1" y="423.1" width="29.1" height="4" fill="#ffffff"/><rect x="1316.2" y="426.3" width="3" height="11.5" fill="#ffffff"/><circle cx="1158.7" cy="506" r="5.2" fill="#ffffff"/><circle cx="1183" cy="506" r="5.2" fill="#ffffff"/><rect x="1156.4" y="488.8" width="28.9" height="4" fill="#ffffff"/><rect x="1169.3" y="492.0" width="3" height="11.5" fill="#ffffff"/><circle cx="1228.6" cy="506" r="5.2" fill="#ffffff"/><circle cx="1253" cy="506" r="5.2" fill="#ffffff"/><rect x="1226.3" y="488.8" width="29.0" height="4" fill="#ffffff"/><rect x="1239.3" y="492.0" width="3" height="11.5" fill="#ffffff"/><circle cx="1305.4" cy="506" r="5.2" fill="#ffffff"/><circle cx="1329.9" cy="506" r="5.2" fill="#ffffff"/><rect x="1303.1" y="488.8" width="29.1" height="4" fill="#ffffff"/><rect x="1316.2" y="492.0" width="3" height="11.5" fill="#ffffff"/><circle cx="1158.7" cy="577.7" r="5.2" fill="#ffffff"/><circle cx="1183" cy="577.7" r="5.2" fill="#ffffff"/><rect x="1156.4" y="560.5" width="28.9" height="4" fill="#ffffff"/><rect x="1169.3" y="563.7" width="3" height="11.5" fill="#ffffff"/><circle cx="1158.7" cy="649.6" r="5.2" fill="#ffffff"/><circle cx="1183" cy="649.6" r="5.2" fill="#ffffff"/><rect x="1156.4" y="632.4" width="28.9" height="4" fill="#ffffff"/><rect x="1169.3" y="635.6" width="3" height="11.5" fill="#ffffff"/><circle cx="1228.6" cy="649.6" r="5.2" fill="#ffffff"/><circle cx="1253" cy="649.6" r="5.2" fill="#ffffff"/><rect x="1226.3" y="632.4" width="29.0" height="4" fill="#ffffff"/><rect x="1239.3" y="635.6" width="3" height="11.5" fill="#ffffff"/><text x="1142.1" y="350.7" textLength="28.4" lengthAdjust="spacingAndGlyphs" font-family="Liberation Sans, sans-serif" font-size="16" font-weight="normal" fill="#5b7db8">SPP</text><text x="1218.9" y="350.7" textLength="58.1" lengthAdjust="spacingAndGlyphs" font-family="Liberation Sans, sans-serif" font-size="16" font-weight="normal" fill="#5b7db8">DriveFLT</text><text x="1142.1" y="416" textLength="57.5" lengthAdjust="spacingAndGlyphs" font-family="Liberation Sans, sans-serif" font-size="16" font-weight="normal" fill="#5b7db8">OSG MR</text><text x="1218.9" y="416" textLength="50.2" lengthAdjust="spacingAndGlyphs" font-family="Liberation Sans, sans-serif" font-size="16" font-weight="normal" fill="#5b7db8">FL TOP</text><text x="1295.6" y="416" textLength="37.8" lengthAdjust="spacingAndGlyphs" font-family="Liberation Sans, sans-serif" font-size="16" font-weight="normal" fill="#5b7db8">FL BT</text><text x="1142.1" y="482.4" textLength="52.9" lengthAdjust="spacingAndGlyphs" font-family="Liberation Sans, sans-serif" font-size="16" font-weight="normal" fill="#5b7db8">OSG CT</text><text x="1218.9" y="482.4" textLength="60.6" lengthAdjust="spacingAndGlyphs" font-family="Liberation Sans, sans-serif" font-size="16" font-weight="normal" fill="#5b7db8">STOP CT</text><text x="1295.6" y="482.4" textLength="73.1" lengthAdjust="spacingAndGlyphs" font-family="Liberation Sans, sans-serif" font-size="16" font-weight="normal" fill="#5b7db8">STOP CAR</text><text x="1142.1" y="548.8" textLength="71.6" lengthAdjust="spacingAndGlyphs" font-family="Liberation Sans, sans-serif" font-size="16" font-weight="normal" fill="#5b7db8">CAR GATE</text><text x="1142.5" y="625.3" textLength="59.5" lengthAdjust="spacingAndGlyphs" font-family="Liberation Sans, sans-serif" font-size="16" font-weight="normal" fill="#5b7db8">TOP FLR</text><text x="1218.9" y="625.3" textLength="100.6" lengthAdjust="spacingAndGlyphs" font-family="Liberation Sans, sans-serif" font-size="16" font-weight="normal" fill="#5b7db8">FLR GATE(n-1)</text><text x="1241" y="735.3" textLength="101.3" lengthAdjust="spacingAndGlyphs" font-family="Liberation Sans, sans-serif" font-size="16" font-weight="normal" fill="#5b7db8">FLOOR GATES</text></svg>
<div class="t tb" style="left:972.5px;top:431.73px;font-size:16.5px;line-height:16.5px;font-family:'Liberation Sans', sans-serif;font-weight:bold;color:#c81ec8;letter-spacing:0.01px;transform:scaleX(1.0004);transform-origin:0.49px 0;">SFTOP1</div>
<div class="t tb" style="left:1004.93px;top:497.43px;font-size:16.5px;line-height:16.5px;font-family:'Liberation Sans', sans-serif;font-weight:bold;color:#c81ec8;letter-spacing:-0.15px;transform:scaleX(0.9901);transform-origin:1.07px 0;">FLR</div>
<div class="t tb" style="left:993.54px;top:568.93px;font-size:16.5px;line-height:16.5px;font-family:'Liberation Sans', sans-serif;font-weight:bold;color:#c81ec8;letter-spacing:-0.05px;transform:scaleX(0.9965);transform-origin:0.66px 0;">CTR1</div>
<div class="t tb" style="left:1002.84px;top:640.53px;font-size:16.5px;line-height:16.5px;font-family:'Liberation Sans', sans-serif;font-weight:bold;color:#c81ec8;letter-spacing:-0.1px;transform:scaleX(0.9937);transform-origin:0.66px 0;">CTR</div>
<div class="t tb" style="left:1002.43px;top:710.13px;font-size:16.5px;line-height:16.5px;font-family:'Liberation Sans', sans-serif;font-weight:bold;color:#c81ec8;letter-spacing:-0.23px;transform:scaleX(0.9863);transform-origin:1.07px 0;">FGR</div>
<div class="b" style="left:964.4px;top:774px;width:262.6px;height:230px;box-sizing:border-box;border-style:solid;border-width:2.2px;border-color:#8d8a7b #fdfcf5 #fdfcf5 #8d8a7b;box-shadow:inset 1px 1px 0 #8d8a7b66, inset -1px -1px 0 #fdfcf577;"></div>
<svg class="b" style="left:977.6px;top:787.8px" width="18" height="18" viewBox="0 0 18 18"><circle cx="9" cy="9" r="7.8" fill="#fdfdf8"/><path d="M4.2 14.6 A7.4 7.4 0 0 1 14.2 3.8" fill="none" stroke="#6e6c62" stroke-width="1.4"/></svg>
<div class="t tb" style="left:999.86px;top:789.06px;font-size:16px;line-height:16px;font-family:'Liberation Sans', sans-serif;font-weight:bold;color:#000;letter-spacing:0.58px;transform:scaleX(1.0524);transform-origin:1.04px 0;">Date</div>
<svg class="b" style="left:1066.1px;top:787.8px" width="18" height="18" viewBox="0 0 18 18"><circle cx="9" cy="9" r="7.8" fill="#fdfdf8"/><path d="M4.2 14.6 A7.4 7.4 0 0 1 14.2 3.8" fill="none" stroke="#6e6c62" stroke-width="1.4"/></svg>
<div class="t tb" style="left:1089.44px;top:789.06px;font-size:16px;line-height:16px;font-family:'Liberation Sans', sans-serif;font-weight:bold;color:#000;letter-spacing:0.11px;transform:scaleX(1.0094);transform-origin:0.16px 0;">Time</div>
<svg class="b" style="left:977.6px;top:818.4px" width="18" height="18" viewBox="0 0 18 18"><circle cx="9" cy="9" r="7.8" fill="#fdfdf8"/><path d="M4.2 14.6 A7.4 7.4 0 0 1 14.2 3.8" fill="none" stroke="#6e6c62" stroke-width="1.4"/></svg>
<div class="t tb" style="left:1000.26px;top:820.86px;font-size:16px;line-height:16px;font-family:'Liberation Sans', sans-serif;font-weight:bold;color:#000;letter-spacing:-0.88px;transform:scaleX(0.9475);transform-origin:0.64px 0;">COP</div>
<svg class="b" style="left:1066.1px;top:820.7px" width="18" height="18" viewBox="0 0 18 18"><circle cx="9" cy="9" r="7.8" fill="#fdfdf8"/><path d="M4.2 14.6 A7.4 7.4 0 0 1 14.2 3.8" fill="none" stroke="#6e6c62" stroke-width="1.4"/></svg>
<div class="t tb" style="left:1088.96px;top:822.06px;font-size:16px;line-height:16px;font-family:'Liberation Sans', sans-serif;font-weight:bold;color:#000;letter-spacing:-0.56px;transform:scaleX(0.9515);transform-origin:0.64px 0;">COP 2</div>
<svg class="b" style="left:1142.6px;top:820.7px" width="18" height="18" viewBox="0 0 18 18"><circle cx="9" cy="9" r="7.8" fill="#fdfdf8"/><path d="M4.2 14.6 A7.4 7.4 0 0 1 14.2 3.8" fill="none" stroke="#6e6c62" stroke-width="1.4"/></svg>
<div class="t tb" style="left:1164.56px;top:822.06px;font-size:16px;line-height:16px;font-family:'Liberation Sans', sans-serif;font-weight:bold;color:#000;letter-spacing:-0.41px;transform:scaleX(0.9755);transform-origin:1.04px 0;">MNT</div>
<svg class="b" style="left:977.6px;top:853.6px" width="18" height="18" viewBox="0 0 18 18"><circle cx="9" cy="9" r="7.8" fill="#fdfdf8"/><path d="M4.2 14.6 A7.4 7.4 0 0 1 14.2 3.8" fill="none" stroke="#6e6c62" stroke-width="1.4"/></svg>
<div class="t tb" style="left:999.86px;top:854.96px;font-size:16px;line-height:16px;font-family:'Liberation Sans', sans-serif;font-weight:bold;color:#000;letter-spacing:-0.59px;transform:scaleX(0.9624);transform-origin:1.04px 0;">LOP</div>
<div class="b" style="left:1152.2px;top:852px;width:67.3px;height:44.2px;box-sizing:border-box;border-style:solid;border-width:2px;border-color:#fdfcf5 #8d8a7b #8d8a7b #fdfcf5;box-shadow:inset 1px 1px 0 #fdfcf566, inset -1px -1px 0 #8d8a7b77;"></div>
<div class="b" style="left:1152.2px;top:896.8px;width:67.3px;height:44px;box-sizing:border-box;border-style:solid;border-width:2px;border-color:#fdfcf5 #8d8a7b #8d8a7b #fdfcf5;box-shadow:inset 1px 1px 0 #fdfcf566, inset -1px -1px 0 #8d8a7b77;"></div>
<div class="t" style="left:1174.25px;top:866.3px;font-size:15px;line-height:15px;font-family:'Liberation Sans', sans-serif;font-weight:normal;color:#111;letter-spacing:-0.13px;transform:scaleX(0.9887);transform-origin:0.75px 0;">Get</div>
<div class="t" style="left:1174.83px;top:910.4px;font-size:15px;line-height:15px;font-family:'Liberation Sans', sans-serif;font-weight:normal;color:#111;letter-spacing:0.06px;transform:scaleX(1.0057);transform-origin:0.67px 0;">Set</div>
<div class="t tb" style="left:975.75px;top:975.3px;font-size:15px;line-height:15px;font-family:'Liberation Sans', sans-serif;font-weight:bold;color:#1414c8;letter-spacing:0.35px;transform:scaleX(1.0501);transform-origin:0.45px 0;">Serial ID:</div>
<div class="b" style="left:1248.7px;top:773.1px;width:154.3px;height:98.7px;box-sizing:border-box;border-style:solid;border-width:2.2px;border-color:#8d8a7b #fdfcf5 #fdfcf5 #8d8a7b;box-shadow:inset 1px 1px 0 #8d8a7b66, inset -1px -1px 0 #fdfcf577;"></div>
<div class="b" style="left:1262.2px;top:786.4px;width:130.3px;height:78.1px;box-sizing:border-box;border-style:solid;border-width:2.2px;border-color:#fdfcf5 #8d8a7b #8d8a7b #fdfcf5;box-shadow:inset 1px 1px 0 #fdfcf566, inset -1px -1px 0 #8d8a7b77;"></div>
<div class="t tb" style="left:1295.18px;top:810.4px;font-size:28px;line-height:28px;font-family:'Liberation Sans', sans-serif;font-weight:bold;color:#000;letter-spacing:-0.04px;transform:scaleX(0.9978);transform-origin:1.82px 0;">EXIT</div>
<div class="b" style="left:1443px;top:695px;width:1px;height:265px;background:#f1f1f1;"></div>
</body></html>
